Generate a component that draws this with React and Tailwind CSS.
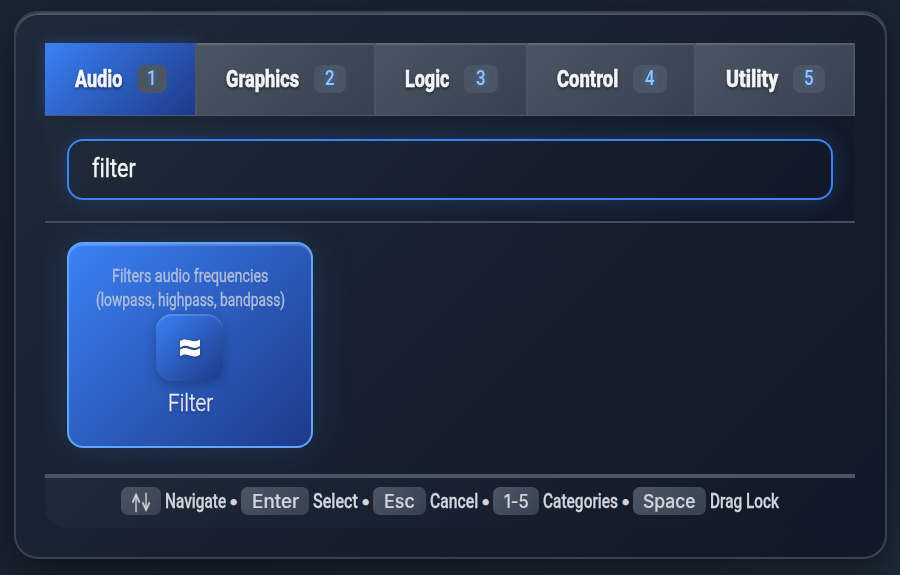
import { useLayoutEffect, useRef, useState } from 'react';

// Text condensed horizontally to a given width.
function Fit({ width, className = '', children }) {
  const ref = useRef(null);
  const [scale, setScale] = useState(1);
  useLayoutEffect(() => {
    const measure = () => setScale(width / ref.current.offsetWidth);
    measure();
    document.fonts.ready.then(measure);
  }, [width]);
  return (
    <span className="inline-flex shrink-0 whitespace-nowrap" style={{ width }}>
      <span ref={ref} className={`shrink-0 origin-left ${className}`} style={{ transform: `scaleX(${scale})` }}>
        {children}
      </span>
    </span>
  );
}

const tabs = [
  { name: 'Audio', text: 47, key: 1, tab: 'w-[152px] pl-[29.5px]', badge: 'w-[30px]', active: true },
  { name: 'Graphics', text: 73, key: 2, tab: 'w-[179px] pl-[28.5px]', badge: 'w-8' },
  { name: 'Logic', text: 44, key: 3, tab: 'w-[152px] pl-[29px]', badge: 'w-[34px]' },
  { name: 'Control', text: 61, key: 4, tab: 'w-[168px] pl-[29px]', badge: 'w-[34px]' },
  { name: 'Utility', text: 52, key: 5, tab: 'w-[159px] pl-[30px]', badge: 'w-8' },
];

const hints = [
  { keys: '↑↓', keyText: 20, arrows: true, box: 'w-10', label: 'Navigate', text: 61, item: 'w-[120px]' },
  { keys: 'Enter', keyText: 47, box: 'w-[68px]', label: 'Select', text: 45, item: 'w-[132px]' },
  { keys: 'Esc', keyText: 31, box: 'w-[53px]', label: 'Cancel', text: 48, item: 'w-[120px]' },
  { keys: '1-5', keyText: 25, box: 'w-[46px]', label: 'Categories', text: 75, item: 'w-[140px]' },
  { keys: 'Space', keyText: 53, box: 'w-[73px]', label: 'Drag Lock', text: 69, item: 'w-[150px]' },
];

function Tab({ name, text, tabKey, tab, badge, active }) {
  return (
    <div
      className={`flex h-full shrink-0 items-center gap-[15px] border-r-2 border-[#4b5563] ${tab} ${
        active
          ? 'bg-linear-135 from-[#3b82f6] to-[#1e3a8a] shadow-[0_0_16px_rgba(59,130,246,0.3)]'
          : 'bg-linear-135 from-[#4b5563] to-[#374151] shadow-[inset_0_2px_0_rgba(255,255,255,0.13)]'
      }`}
    >
      <Fit width={text} className="text-[24.5px] leading-[30px] font-extrabold text-[#f3f4f6] [text-shadow:0_2px_4px_rgba(0,0,0,0.5)] [-webkit-text-stroke:0.5px_#f3f4f6]">
        {name}
      </Fit>
      <span className={`flex h-7 shrink-0 items-center justify-center rounded-lg bg-[#4b5563] ${badge}`}>
        <Fit width={9.5} className="text-[19.5px] leading-6 font-medium text-[#93c5fd] [text-shadow:0_0_8px_rgba(59,130,246,0.8)]">
          {tabKey}
        </Fit>
      </span>
    </div>
  );
}

export default function App() {
  return (
    <div className="h-[575px] w-[900px] overflow-hidden bg-linear-135 from-[#1a2633] via-[#192231] to-[#1d2a38] pt-[11px] pl-[14px] font-[Roboto,sans-serif] [font-variant-ligatures:none]">
      <div className="flex h-[548px] w-[873px] flex-col rounded-[24px] border-2 border-[#374151] bg-linear-135 from-[#1f2937] to-[#111827] pt-[30px] pl-[29px] shadow-[0_12px_40px_rgba(0,0,0,0.45),inset_0_2px_0_rgba(255,255,255,0.22)]">
        <div className="flex h-[73px] w-[810px] shrink-0 border-b border-[#4b5563]">
          {tabs.map(({ key, ...t }) => (
            <Tab key={key} tabKey={key} {...t} />
          ))}
        </div>

        <div className="h-[107px] w-[810px] shrink-0 border-b-2 border-[#434c5a] bg-linear-135 from-[#1f2937] to-[#111827] px-[22px] pt-[22.5px]">
          <div className="flex h-[61px] items-center rounded-[16px] border-2 border-[#3b82f6] bg-linear-135 from-[#1f2937] to-[#111827] pl-[22.5px] shadow-[0_0_22px_rgba(59,130,246,0.25)]">
            <Fit width={44} className="text-[25px] leading-[30px] text-[#f3f4f6] [-webkit-text-stroke:0.4px_#f3f4f6]">filter</Fit>
          </div>
        </div>

        <div className="h-[251px] w-[810px] shrink-0 overflow-hidden px-[22px] pt-[19px]">
          <div className="flex h-[206px] w-[246px] flex-col items-center rounded-[16px] border-2 border-[#60a5fa] bg-linear-135 from-[#3b82f6] to-[#1e3a8a] pt-[20px] shadow-[0_0_40px_rgba(59,130,246,0.2),inset_0_2px_0_rgba(255,255,255,0.18)]">
            <Fit width={156} className="text-[18.5px] leading-6 text-[#b0bcd8] [-webkit-text-stroke:0.4px_#b0bcd8]">Filters audio frequencies</Fit>
            <Fit width={189} className="text-[18.5px] leading-6 text-[#b0bcd8] [-webkit-text-stroke:0.4px_#b0bcd8]">(lowpass, highpass, bandpass)</Fit>
            <div className="mt-[2px] mr-[1px] flex h-[67px] w-[67px] shrink-0 items-center justify-center rounded-[16px] bg-linear-135 from-[#3b82f6] to-[#1e3a8a] shadow-[0_4px_12px_rgba(0,0,0,0.25),inset_0_2px_0_rgba(255,255,255,0.15)]">
              <svg viewBox="0 0 20 18" className="h-[18px] w-[20px] fill-white drop-shadow-[0_1px_2px_rgba(0,0,0,0.3)]">
                <path d="M0 2C3 0 6 0 9.500 1.300C13.500 2.800 16.500 2.700 20 .6V7C17 9.400 13.500 9.500 9.700 7.800C6 6.300 3.200 6.500 0 8.700Z" />
                <path d="M0 10.700C3 8.600 6 8.500 9.500 10C13.500 11.700 16.500 11.500 20 9V15.400C17 17.900 13.500 18 9.700 16.400C6 15 3.200 15.200 0 17.300Z" />
              </svg>
            </div>
            <Fit width={45} className="mt-[8px] text-[23px] leading-[30px] font-light text-[#e5e7eb] [text-shadow:0_1px_3px_rgba(0,0,0,0.4)] [-webkit-text-stroke:0.4px_#e5e7eb]">Filter</Fit>
          </div>
        </div>

        <div className="flex h-[54px] w-[810px] shrink-0 rounded-b-[22px] border-t-4 border-[#4b5563] bg-linear-135 from-[#1f2937] to-[#111827] pt-[9px] pl-[76px]">
          {hints.map((h, i) => (
            <div key={h.keys} className={`flex h-7 shrink-0 items-center ${h.item}`}>
              <span className={`mr-[4px] flex h-7 shrink-0 items-center justify-center rounded-[7px] bg-linear-135 from-[#4b5563] to-[#374151] ${h.box}`}>
                <Fit
                  width={h.keyText}
                  className={`font-[Inter,sans-serif] text-[#d1d5db] ${h.arrows ? 'translate-y-[2px] text-[25px] leading-7 font-medium [-webkit-text-stroke:0.4px_#d1d5db]' : 'text-[18.5px] leading-6 font-medium [-webkit-text-stroke:0.2px_#d1d5db]'}`}
                >
                  {h.keys}
                </Fit>
              </span>
              <Fit width={h.text} className="text-[20px] leading-6 font-medium text-[#d1d5db] [-webkit-text-stroke:0.3px_#d1d5db]">{h.label}</Fit>
              {i < hints.length - 1 && <span className="ml-[2px] font-[Inter,sans-serif] text-[20px] leading-6 text-[#d1d5db]">•</span>}
            </div>
          ))}
        </div>
      </div>
    </div>
  );
}
